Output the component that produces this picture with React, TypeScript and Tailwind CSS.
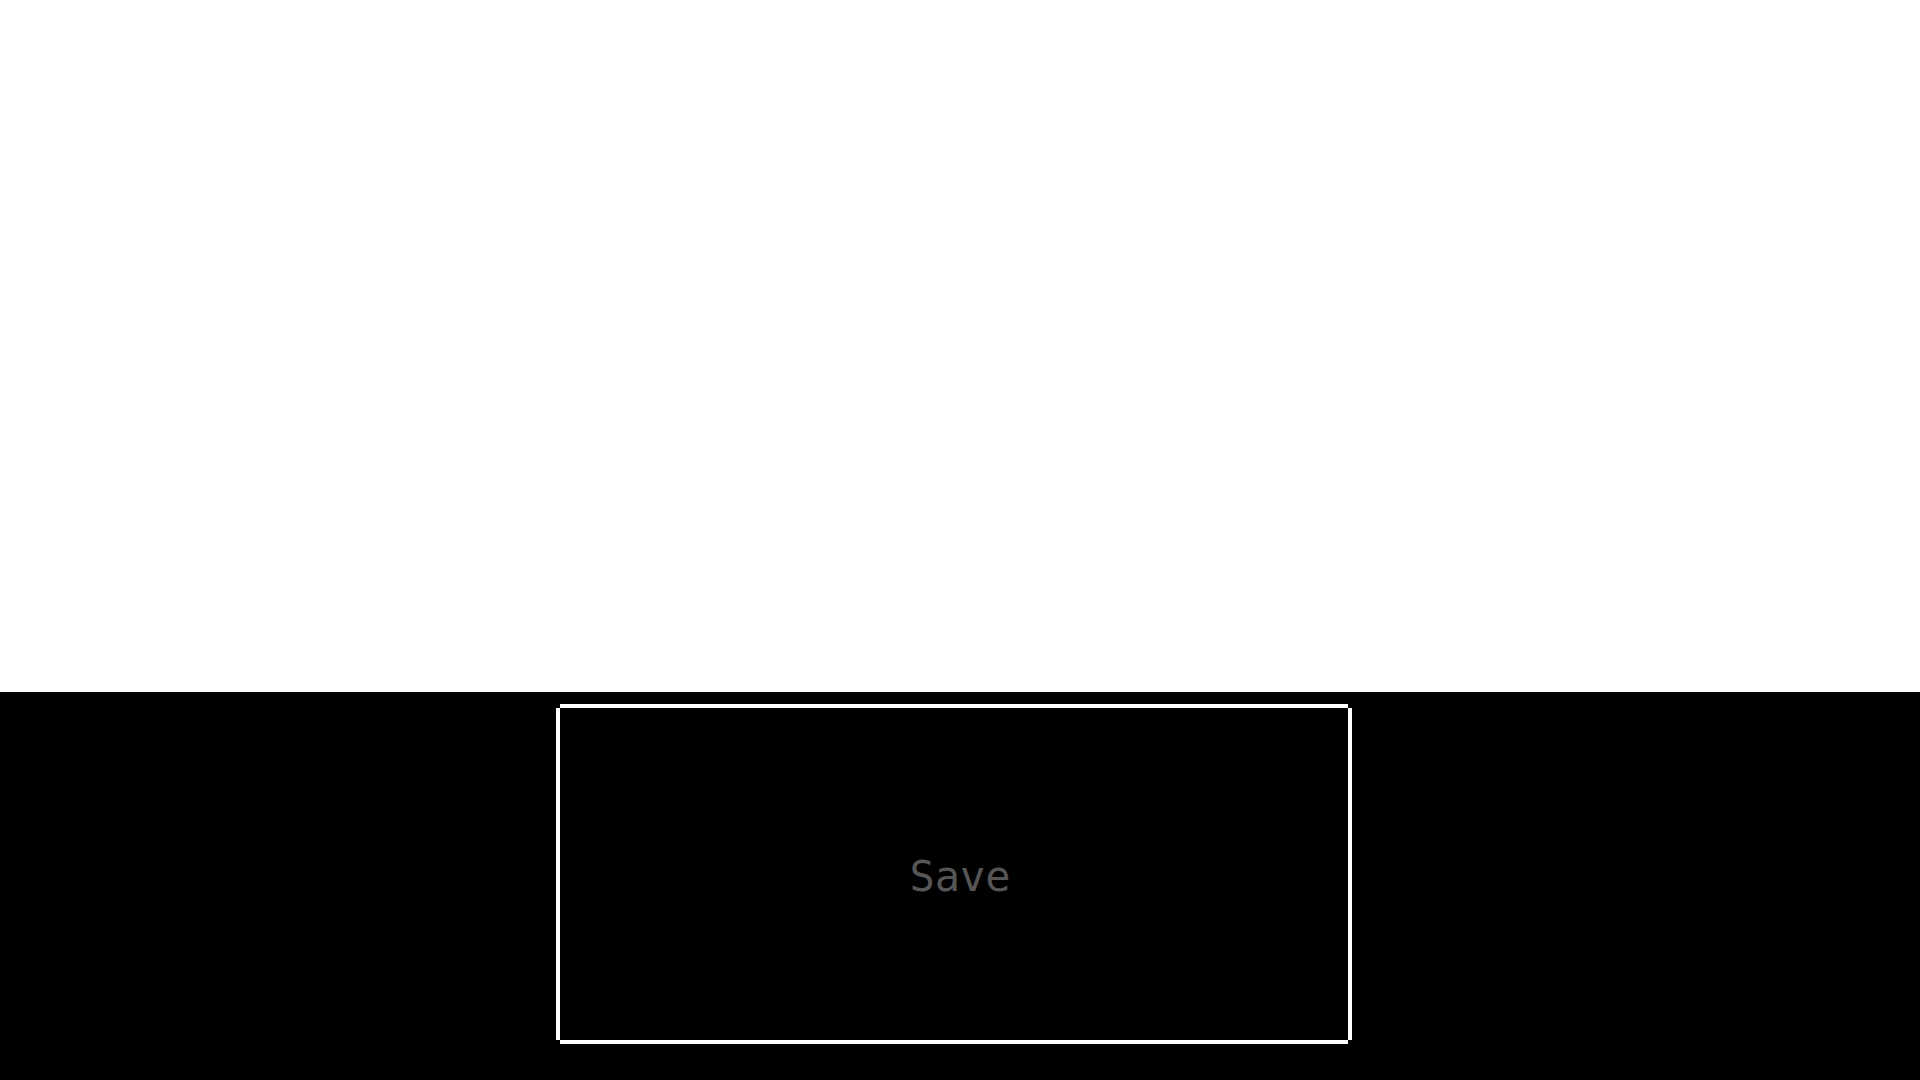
export default function App() {
  return (
    <div className="w-[1920px] h-[1080px] flex flex-col bg-white">
      <div className="h-[692px] bg-white" />
      <div className="flex-1 bg-black pt-[16px] pl-[560px]">
        <button
          type="button"
          className="w-[788px] h-[332px] bg-black flex items-center justify-center pl-[12px] pt-[6px] shadow-[0_-4px_0_#fff,0_4px_0_#fff,-4px_0_0_#fff,4px_0_0_#fff]"
        >
          <span className="text-[42px] leading-none text-[#555555] font-['DejaVu_Sans_Mono',monospace]">
            Save
          </span>
        </button>
      </div>
    </div>
  );
}
